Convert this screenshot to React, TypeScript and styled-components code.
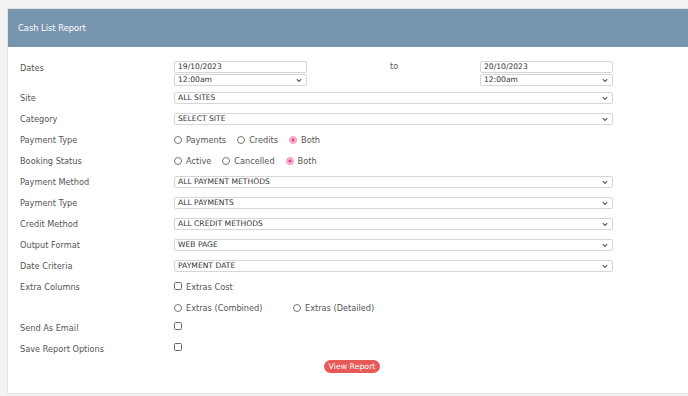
import React from 'react';
import styled, { createGlobalStyle } from 'styled-components';

const Global = createGlobalStyle`
  html, body { margin: 0; padding: 0; background: #f2f2f2; }
  body { font-family: "DejaVu Sans", "Open Sans", sans-serif; }
  * { box-sizing: border-box; }
`;

const Page = styled.div`
  padding: 8px 0 0 7px;
  width: 688px;
  height: 396px;
  overflow: hidden;
`;

const Card = styled.div`
  background: #fff;
  border: 1px solid #e2e2e2;
  width: 700px;
  height: 386px;
`;

const Header = styled.div`
  background: #7895ae;
  height: 38px;
  display: flex;
  align-items: center;
  padding-left: 10px;
  color: #fff;
  font-size: 8.3px;
`;

const Body = styled.div`
  padding: 12px 0 0 12px;
`;

const Row = styled.div<{ h?: number }>`
  display: grid;
  grid-template-columns: 154px 439px;
  align-items: center;
  min-height: ${p => p.h ?? 21}px;
`;

const Label = styled.div<{ top?: boolean }>`
  font-size: 8.2px;
  color: #555;
  align-self: ${p => (p.top ? 'start' : 'center')};
  margin-top: ${p => (p.top ? '4px' : '0')};
`;

const DateGrid = styled.div`
  display: grid;
  grid-template-columns: 216px 90px 133px;
  align-items: start;
`;

const Stack = styled.div`
  display: flex;
  flex-direction: column;
  gap: 1px;
  width: 133px;
`;

const To = styled.span`
  font-size: 8px;
  color: #555;
  margin-top: 1px;
`;

const TextInput = styled.div`
  height: 12px;
  border: 1px solid #d6d6d6;
  border-radius: 2px;
  font-size: 7.6px;
  color: #333;
  padding: 0 3px;
  display: flex;
  align-items: center;
`;

const SelectBox = styled.div`
  position: relative;
  height: 12px;
  border: 1px solid #d6d6d6;
  border-radius: 2px;
  font-size: 7.6px;
  color: #333;
  padding: 0 3px;
  display: flex;
  align-items: center;
`;

const Chevron = styled.svg`
  position: absolute;
  right: 4px;
  top: 3px;
`;

const Select = ({ children }: { children: React.ReactNode }) => (
  <SelectBox>
    {children}
    <Chevron width="6" height="5" viewBox="0 0 6 5">
      <path d="M0.8 1.2 L3 3.4 L5.2 1.2" fill="none" stroke="#555" strokeWidth="1.1" />
    </Chevron>
  </SelectBox>
);

const Options = styled.div<{ gap?: number }>`
  display: flex;
  align-items: center;
  gap: ${p => p.gap ?? 11}px;
`;

const Opt = styled.label<{ w?: number }>`
  display: flex;
  align-items: center;
  gap: 4px;
  font-size: 8.2px;
  color: #555;
  width: ${p => (p.w ? p.w + 'px' : 'auto')};
`;

const Radio = styled.span<{ on?: boolean }>`
  width: 8px;
  height: 8px;
  border-radius: 50%;
  border: 1px solid ${p => (p.on ? '#f7a8c8' : '#777')};
  background: ${p => (p.on ? '#e83e8c' : '#fff')};
  box-shadow: ${p => (p.on ? 'inset 0 0 0 1.3px #fbd0e2' : 'none')};
  flex: none;
`;

const Check = styled.span<{ raise?: number }>`
  width: 8px;
  height: 8px;
  border-radius: 1.5px;
  border: 1px solid #666;
  background: #fff;
  flex: none;
  margin-top: ${p => -(p.raise ?? 4)}px;
`;

const Footer = styled.div`
  display: flex;
  justify-content: center;
  width: 690px;
  padding: 1px 0 0 0;
  margin-left: -12px;
`;

const ViewButton = styled.button`
  background: #e85a58;
  color: #fff;
  border: none;
  border-radius: 7px;
  height: 13px;
  padding: 0 5px;
  font-size: 7.8px;
  font-family: inherit;
  margin-left: -2px;
`;

const selects: [string, string][] = [
  ['Site', 'ALL SITES'],
  ['Category', 'SELECT SITE'],
];

const selects2: [string, string][] = [
  ['Payment Method', 'ALL PAYMENT METHODS'],
  ['Payment Type', 'ALL PAYMENTS'],
  ['Credit Method', 'ALL CREDIT METHODS'],
  ['Output Format', 'WEB PAGE'],
  ['Date Criteria', 'PAYMENT DATE'],
];

export default function App() {
  return (
    <Page>
      <Global />
      <Card>
        <Header>Cash List Report</Header>
        <Body>
          <Row h={28}>
            <Label top>Dates</Label>
            <DateGrid>
              <Stack>
                <TextInput>19/10/2023</TextInput>
                <Select>12:00am</Select>
              </Stack>
              <To>to</To>
              <Stack>
                <TextInput>20/10/2023</TextInput>
                <Select>12:00am</Select>
              </Stack>
            </DateGrid>
          </Row>
          {selects.map(([l, v]) => (
            <Row key={l}>
              <Label>{l}</Label>
              <Select>{v}</Select>
            </Row>
          ))}
          <Row>
            <Label>Payment Type</Label>
            <Options>
              <Opt><Radio />Payments</Opt>
              <Opt><Radio />Credits</Opt>
              <Opt><Radio on />Both</Opt>
            </Options>
          </Row>
          <Row>
            <Label>Booking Status</Label>
            <Options>
              <Opt><Radio />Active</Opt>
              <Opt><Radio />Cancelled</Opt>
              <Opt><Radio on />Both</Opt>
            </Options>
          </Row>
          {selects2.map(([l, v]) => (
            <Row key={l + v}>
              <Label>{l}</Label>
              <Select>{v}</Select>
            </Row>
          ))}
          <Row>
            <Label>Extra Columns</Label>
            <Opt><Check raise={2} />Extras Cost</Opt>
          </Row>
          <Row>
            <Label />
            <Options gap={0}>
              <Opt w={119}><Radio />Extras (Combined)</Opt>
              <Opt><Radio />Extras (Detailed)</Opt>
            </Options>
          </Row>
          <Row h={20}>
            <Label>Send As Email</Label>
            <Opt><Check /></Opt>
          </Row>
          <Row h={21}>
            <Label>Save Report Options</Label>
            <Opt><Check /></Opt>
          </Row>
          <Footer>
            <ViewButton>View Report</ViewButton>
          </Footer>
        </Body>
      </Card>
    </Page>
  );
}
